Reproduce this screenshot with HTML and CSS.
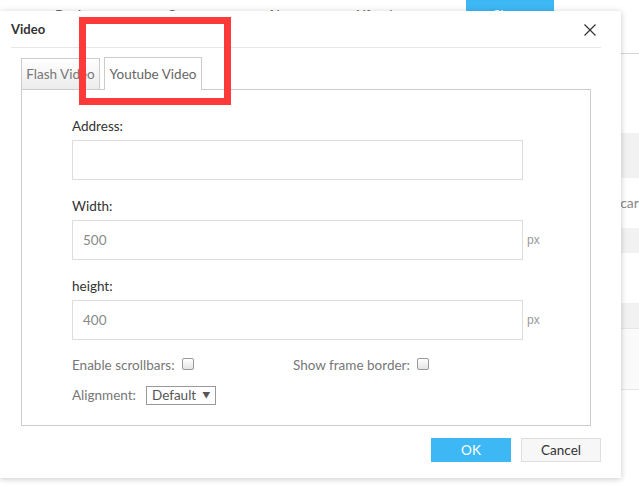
FILE: index.html
```html
<!doctype html>
<html>
<head>
<title>Video</title>
<meta charset="utf-8">
<link rel="stylesheet" href="styles.css">
</head>
<body>

<div class="page">
	<div class="topbar">
		<ul class="nav">
			<li class="n1">Business</li>
			<li class="n2">Contact</li>
			<li class="n3">About us</li>
			<li class="n4">Xfeed</li>
		</ul>
		<a class="topbtn" href="javascript:;">Share</a>
	</div>
	<div class="band b1"></div>
	<div class="row-text"><span>Oscar</span></div>
	<div class="band b2"></div>
	<div class="blank"></div>
	<div class="band b3"></div>
	<div class="soft"></div>
</div>

<div class="dialog">
	<div class="dlg_head">
		<span class="dlg_title">Video</span>
		<a class="dlg_close" href="javascript:;">
			<svg width="12" height="12" viewBox="0 0 12 12"><path d="M0.5 0.5L11.5 11.5M11.5 0.5L0.5 11.5" stroke="#333" stroke-width="1.2" fill="none"/></svg>
		</a>
	</div>
	<div class="tabs">
		<div class="tab t_flash">Flash Video</div>
		<div class="tab t_tube active">Youtube Video</div>
	</div>
	<div class="tab_panel">
		<div class="field">
			<label>Address:</label>
			<div class="input_row"><input class="ipt" type="text" value=""></div>
		</div>
		<div class="field">
			<label>Width:</label>
			<div class="input_row"><input class="ipt" type="text" value="500"><span class="unit">px</span></div>
		</div>
		<div class="field">
			<label>height:</label>
			<div class="input_row"><input class="ipt" type="text" value="400"><span class="unit">px</span></div>
		</div>
		<div class="checks">
			<div class="chk_item">Enable scrollbars:<span class="chk"></span></div>
			<div class="chk_item">Show frame border:<span class="chk"></span></div>
		</div>
		<div class="align_row">
			<span>Alignment:</span>
			<div class="sel">Default<span class="arr">&#9660;</span></div>
		</div>
	</div>
	<div class="dlg_foot">
		<a class="btn ok" href="javascript:;">OK</a>
		<a class="btn cancel" href="javascript:;">Cancel</a>
	</div>
</div>

<div class="mark"></div>

</body>
</html>
```

FILE: styles.css
```css
html,body{margin:0;padding:0;}
body{background:#fff;font:13.5px Lato,"Noto Sans","Noto Sans CJK SC",sans-serif;color:#333;overflow:hidden;}
ul{padding:0;margin:0;}
li{margin:0;padding:0;list-style-type:none;}
a{text-decoration:none;}

/* page behind the dialog */
.page{width:639px;}
.topbar{height:53px;border-bottom:1px solid #d6d6d6;display:flex;align-items:flex-start;margin-bottom:79px;}
.nav{display:flex;padding-top:8px;}
.nav li{font-size:14px;line-height:14px;color:#666;}
.nav .n1{margin-left:55px;}
.nav .n2{margin-left:58px;}
.nav .n3{margin-left:52px;}
.nav .n4{margin-left:34px;}
.topbtn{margin-left:auto;margin-right:85px;width:88px;height:36px;box-sizing:border-box;padding-top:8px;background:#3db8f5;color:#fff;text-align:center;font-size:14px;line-height:14px;}
.band{background:#f2f2f2;}
.b1{height:45px;}
.row-text{height:50px;line-height:50px;color:#888;font-size:14px;}
.row-text span{margin-left:603px;}
.b2{height:25px;}
.blank{height:50px;}
.b3{height:25px;border-bottom:1px solid #e6e6e6;}
.soft{height:60px;background:#fafafa;border-bottom:1px solid #e6e6e6;}

/* dialog */
.dialog{position:absolute;left:0;top:11px;width:621px;height:467px;background:#fff;box-shadow:0 1px 6px rgba(0,0,0,0.22);}
.dlg_head{height:36px;margin:0 20px 0 11px;border-bottom:1px solid #e6e6e6;display:flex;align-items:center;justify-content:space-between;}
.dlg_title{font-weight:bold;font-size:13px;color:#333;}
.dlg_close{display:flex;margin-right:5px;margin-top:2px;}

.tabs{display:flex;align-items:flex-end;gap:4px;margin:9px 0 0 21px;height:32px;}
.tab{box-sizing:border-box;height:31px;line-height:30px;border:1px solid #ccc;border-bottom:none;text-align:center;color:#777;background:linear-gradient(#fff,#ececec);white-space:nowrap;}
.t_flash{width:79px;}
.t_tube{width:98px;}
.tab.active{height:33px;margin-bottom:-1px;background:#fff;color:#666;position:relative;z-index:1;line-height:32px;}

.tab_panel{box-sizing:border-box;margin-left:21px;width:570px;height:337px;border:1px solid #ccc;padding:26px 0 0 50px;}
.field{margin-bottom:16px;}
.field label{display:block;line-height:20px;margin-bottom:4px;color:#333;}
.input_row{display:flex;align-items:center;}
.ipt{box-sizing:border-box;width:451px;height:40px;border:1px solid #ddd;padding:0 10px;font:13.5px Lato,"Noto Sans","Noto Sans CJK SC",sans-serif;color:#888;outline:none;}
.unit{margin-left:4px;font:12px "Liberation Sans",Arial,sans-serif;color:#999;}

.checks{display:grid;grid-template-columns:221px auto;margin-top:-1px;line-height:20px;color:#777;}
.chk_item{display:flex;align-items:center;}
.chk{box-sizing:border-box;width:12px;height:12px;border:1px solid #999;border-radius:2px;background:linear-gradient(#fff,#e4e4e4);margin:0 0 3px 7px;}

.align_row{display:flex;align-items:center;margin-top:10px;line-height:20px;color:#777;}
.sel{box-sizing:border-box;height:19px;line-height:17px;margin-left:10px;border:1px solid #999;padding:0 5px;color:#555;display:flex;align-items:center;}
.arr{font-size:8px;margin-left:6px;color:#555;}

.dlg_foot{display:flex;justify-content:flex-end;gap:10px;margin:12px 20px 0 0;}
.btn{box-sizing:border-box;width:80px;height:24px;line-height:22px;text-align:center;font-size:13.5px;}
.ok{background:#3db8f5;color:#fff;border:1px solid #3db8f5;}
.cancel{background:#f7f7f7;color:#333;border:1px solid #dedede;}

/* red mark over the screenshot */
.mark{position:absolute;left:79px;top:17px;width:152px;height:88px;box-sizing:border-box;border:7px solid #fd3a3a;z-index:10;}
```
